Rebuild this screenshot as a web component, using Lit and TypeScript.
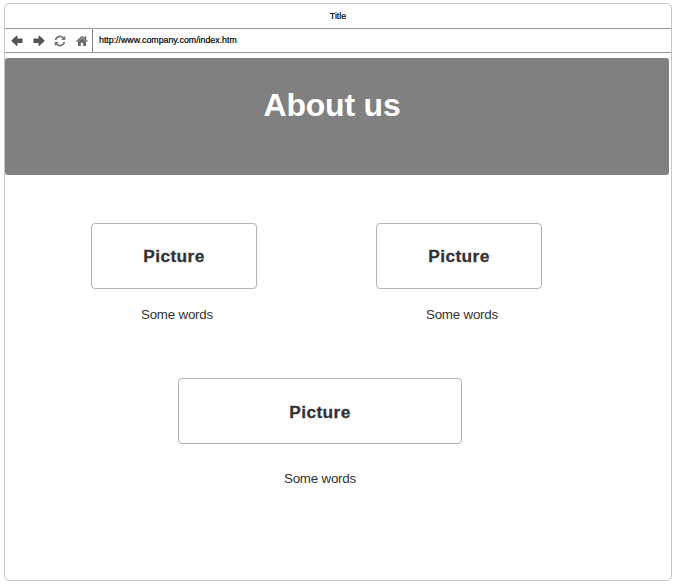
import { LitElement, html, css } from "lit";
import { customElement, property } from "lit/decorators.js";

@customElement("picture-card")
class PictureCard extends LitElement {
  @property() label = "Picture";
  @property() caption = "Some words";

  static styles = css`
    :host { display: flex; flex-direction: column; align-items: center; gap: var(--caption-gap, 18px); }
    .frame {
      box-sizing: border-box; width: 100%; height: 66px; padding-top: var(--label-drop, 0px);
      border: 1px solid #b3b3b3; border-radius: 4px;
      display: flex; align-items: center; justify-content: center;
      font-size: 17.33px; font-weight: bold; letter-spacing: 0.4px; line-height: 20px;
      color: #333; -webkit-text-stroke: 0.3px #333;
    }
    .caption {
      font-size: 13.33px; letter-spacing: -0.2px; line-height: 16px; color: #333;
      padding-left: var(--caption-shift, 6px);
    }
  `;

  render() {
    return html`<div class="frame">${this.label}</div>
      <div class="caption">${this.caption}</div>`;
  }
}

@customElement("app-root")
class AppRoot extends LitElement {
  static styles = css`
    :host {
      display: block; box-sizing: border-box; height: 585px; padding: 3px 4px 4px;
      background: #fff; font-family: "Liberation Sans", Arial, sans-serif;
    }
    .window {
      box-sizing: border-box; width: 668px; height: 578px;
      border: 1px solid #c6c6c6; border-radius: 5px;
    }
    .title {
      box-sizing: border-box; height: 25px; border-bottom: 1px solid #999;
      display: flex; align-items: center; justify-content: center;
      font-size: 8.8px; line-height: 12px; color: #000; -webkit-text-stroke: 0.2px #000;
    }
    .toolbar {
      box-sizing: border-box; height: 24px; border-bottom: 1px solid #999;
      display: flex; font-size: 8.8px; color: #000;
    }
    .buttons {
      box-sizing: border-box; width: 88px; padding-left: 6px; border-right: 1px solid #808080;
      display: flex; align-items: center; gap: 9.5px;
    }
    svg { display: block; width: 12px; height: 12px; flex: none; }
    .url { padding-left: 6px; line-height: 23px; -webkit-text-stroke: 0.2px #000; }
    .banner {
      box-sizing: border-box; width: 664px; height: 117px; margin-top: 5px; padding-top: 29px;
      background: #808080; border-radius: 3px; text-align: center; padding-right: 10px;
      font-size: 32px; letter-spacing: -0.2px; line-height: 36px; font-weight: bold; color: #fff;
    }
    .row { display: flex; gap: 119px; padding: 48px 0 0 86px; }
    .row picture-card { width: 166px; }
    .row.single { padding: 55px 0 0 173px; }
    .row.single picture-card {
      width: 284px; --caption-gap: 27px; --caption-shift: 0px; --label-drop: 2px;
    }
  `;

  render() {
    return html`
      <div class="window">
        <div class="title">Title</div>
        <div class="toolbar">
          <div class="buttons">
            <svg viewBox="0 0 12 12"><path fill="#555" stroke="#555" stroke-width="1.2" stroke-linejoin="round" d="M1 5.8 5.9 1.3V4.1H11V7.5H5.9V10.3Z"/></svg>
            <svg viewBox="0 0 12 12"><path fill="#555" stroke="#555" stroke-width="1.2" stroke-linejoin="round" d="M11 5.8 6.1 1.3V4.1H1V7.5H6.1V10.3Z"/></svg>
            <svg viewBox="0 0 12 12">
              <path fill="none" stroke="#777" stroke-width="1.7" d="M1.5 5A4.6 4.6 0 0 1 9.5 3.1M10.5 7A4.6 4.6 0 0 1 2.5 8.9"/>
              <path fill="#777" d="M11.3 0.8V5H7.1ZM0.7 11.2V7H4.9Z"/>
            </svg>
            <svg viewBox="0 0 12 12">
              <path fill="#666" d="M6 3.1 10 6.6V11H7.2V7.8H4.8V11H2V6.6Z"/>
              <path fill="none" stroke="#666" stroke-width="1.4" d="M0.6 6.4 6 1.6 11.4 6.4"/>
              <path fill="#666" d="M8.5 1.2H10.2V5L8.5 3.4Z"/>
            </svg>
          </div>
          <div class="url">http://www.company.com/index.htm</div>
        </div>
        <div class="banner">About us</div>
        <div class="row">
          <picture-card></picture-card>
          <picture-card></picture-card>
        </div>
        <div class="row single"><picture-card></picture-card></div>
      </div>
    `;
  }
}
